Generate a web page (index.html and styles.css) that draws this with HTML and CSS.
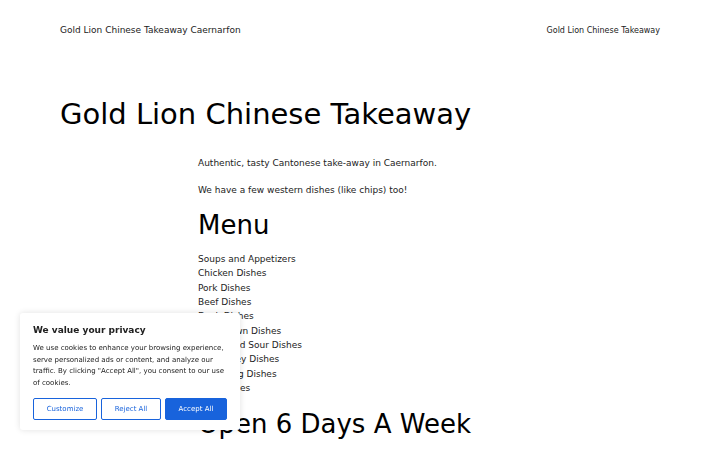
FILE: index.html
```html
<!DOCTYPE html>
<html lang="en">
<head>
<meta charset="utf-8">
<title>Gold Lion Chinese Takeaway</title>
<link rel="stylesheet" href="styles.css">
</head>
<body>
<header class="site-header">
  <a class="site-title" href="#">Gold Lion Chinese Takeaway Caernarfon</a>
  <nav class="site-nav"><a href="#">Gold Lion Chinese Takeaway</a></nav>
</header>
<main class="site-main">
  <h1 class="page-title">Gold Lion Chinese Takeaway</h1>
  <div class="content">
    <p>Authentic, tasty Cantonese take-away in Caernarfon.</p>
    <p>We have a few western dishes (like chips) too!</p>
    <h2>Menu</h2>
    <ul class="menu-list">
      <li>Soups and Appetizers</li>
      <li>Chicken Dishes</li>
      <li>Pork Dishes</li>
      <li>Beef Dishes</li>
      <li>Duck Dishes</li>
      <li>King Prawn Dishes</li>
      <li>Sweet and Sour Dishes</li>
      <li>Chop Suey Dishes</li>
      <li>Foo Young Dishes</li>
      <li>Rice Dishes</li>
    </ul>
    <h2 class="hours-title">Open 6 Days A Week</h2>
  </div>
</main>
<div class="cookie-banner">
  <p class="cookie-title">We value your privacy</p>
  <p class="cookie-text">We use cookies to enhance your browsing experience, serve personalized ads or content, and analyze our traffic. By clicking "Accept All", you consent to our use of cookies.</p>
  <div class="cookie-buttons">
    <button class="btn btn-outline">Customize</button>
    <button class="btn btn-outline">Reject All</button>
    <button class="btn btn-primary">Accept All</button>
  </div>
</div>
</body>
</html>
```
FILE: styles.css
```css
html, body {
  margin: 0;
  padding: 0;
  background: #fff;
}
body {
  font-family: "DejaVu Sans", sans-serif;
  color: #111;
  font-size: 9px;
}
a {
  color: inherit;
  text-decoration: none;
}
.site-header {
  display: flex;
  justify-content: space-between;
  align-items: center;
  padding: 23px 60px 0;
  height: 14px;
}
.site-title {
  font-size: 9px;
  color: #222;
}
.site-nav {
  font-size: 8px;
  color: #222;
}
.site-main {
  padding: 0 60px;
}
.page-title {
  font-size: 29px;
  font-weight: normal;
  margin: 57px 0 0;
  line-height: 40px;
  color: #000;
}
.content {
  width: 324px;
  margin: 0 auto;
  padding-top: 22px;
}
.content p {
  margin: 0 0 13px;
  line-height: 14px;
  color: #222;
}
.content p + h2 {
  margin-top: -2px;
}
.content h2 {
  font-size: 26px;
  font-weight: normal;
  margin: 0;
  line-height: 34px;
  color: #000;
}
.menu-list {
  list-style: none;
  padding: 0;
  margin: 10px 0 0;
  line-height: 14.35px;
  color: #222;
}
.content .hours-title {
  margin-top: 12px;
}
.cookie-banner {
  position: fixed;
  left: 20px;
  bottom: 20px;
  width: 194px;
  padding: 10px 13px 10px;
  background: #fff;
  box-shadow: 0 0 6px rgba(0,0,0,0.12);
  border-radius: 3px;
  color: #212121;
}
.cookie-title {
  margin: 0 0 6px;
  font-size: 9px;
  font-weight: bold;
  line-height: 14px;
}
.cookie-text {
  margin: 0 0 8px;
  font-size: 7px;
  line-height: 11.8px;
  color: #212121;
}
.cookie-buttons {
  display: flex;
  gap: 4px;
}
.btn {
  flex: 1 1 auto;
  height: 22px;
  font-family: "DejaVu Sans", sans-serif;
  font-size: 7px;
  border-radius: 2px;
  padding: 0;
}
.btn-outline {
  background: #fff;
  border: 1.5px solid #1863dc;
  color: #1863dc;
}
.btn-primary {
  background: #1863dc;
  border: 1.5px solid #1863dc;
  color: #fff;
}
```
